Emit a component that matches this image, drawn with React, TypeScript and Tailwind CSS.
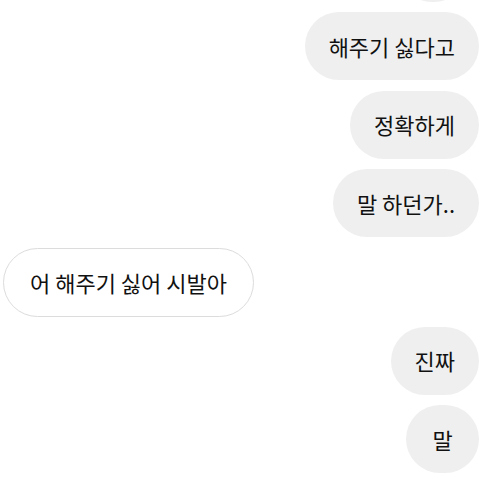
type Msg = {
  text: string
  mine: boolean
}

const messages: Msg[] = [
  { text: '해주기 싫다고', mine: true },
  { text: '정확하게', mine: true },
  { text: '말 하던가..', mine: true },
  { text: '어 해주기 싫어 시발아', mine: false },
  { text: '진짜', mine: true },
  { text: '말', mine: true },
]

const Bubble = ({ text, mine }: Msg) => (
  <div className={mine ? 'flex justify-end pr-[1px]' : 'flex justify-start pl-[3px]'}>
    <div
      className={
        mine
          ? 'h-[68px] min-w-[73px] flex items-center justify-center rounded-full bg-[#efefef] px-[24px] text-[22px] text-[#111111]'
          : 'h-[69px] flex items-center rounded-full bg-white border-[1.5px] border-[#dcdcdc] px-[26px] text-[22px] text-[#111111]'
      }
    >
      {text}
    </div>
  </div>
)

export default function App() {
  return (
    <div
      className="w-[480px] h-[480px] overflow-hidden bg-white"
      style={{ fontFamily: '"Noto Sans CJK KR", "Noto Sans", sans-serif' }}
    >
      <div className="flex flex-col gap-[10.4px] -mt-[66px]">
        {/* previous bubble, only its bottom edge shows */}
        <div className="flex justify-end pr-[12px]">
          <div className="h-[68px] w-[70px] rounded-full bg-[#efefef]" />
        </div>
        {messages.map((m, i) => (
          <Bubble key={i} {...m} />
        ))}
      </div>
    </div>
  )
}
